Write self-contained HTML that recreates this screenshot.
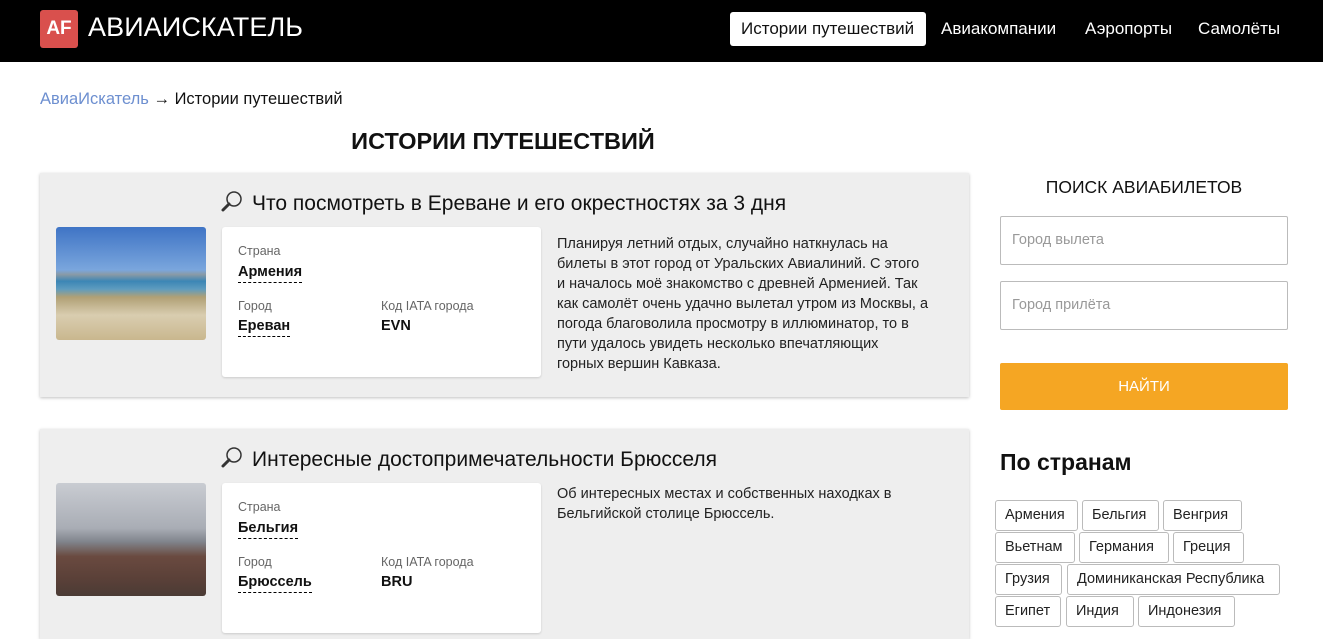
<!DOCTYPE html>
<html><head><meta charset="utf-8"><style>
*{box-sizing:border-box;margin:0;padding:0}
body{width:1323px;height:623px;overflow:hidden;background:#fff;font-family:"Liberation Sans","DejaVu Sans",sans-serif;color:#111;position:relative}
.a{position:absolute}
.hdr{left:0;top:0;width:1323px;height:62px;background:#000}
.logo{left:40px;top:10px;width:38px;height:38px;background:#d9504d;border-radius:3px;color:#fff;font-weight:bold;font-size:19px;line-height:38px;text-align:center}
.brand{left:88px;top:12px;color:#fff;font-size:27px;letter-spacing:0.1px}
.nav{top:12px;height:34px;line-height:34px;font-size:17px;color:#fff}
.nav.on{background:#fff;color:#111;border-radius:3px;padding:0 11px}
.card{left:40px;width:929px;background:#eee;box-shadow:0 1px 3px rgba(0,0,0,.25)}
.ttl{font-size:21px;color:#111;white-space:nowrap}
.img{width:150px;height:113px;border-radius:3px}
.info{width:319px;background:#fff;border-radius:3px;box-shadow:0 1px 2px rgba(0,0,0,.15)}
.lb{font-size:12.5px;color:#666}
.vl{font-size:14.5px;font-weight:bold;border-bottom:1px dashed #000;padding-bottom:2px;color:#111}
.desc{font-size:14.5px;line-height:20px;color:#222;white-space:nowrap}
.inp{left:1000px;width:288px;height:49px;border:1px solid #bbb;border-radius:2px;font-size:14.5px;color:#999;padding:15px 11px}
.tag{position:absolute;height:31px;border:1px solid #bbb;border-radius:3px;font-size:14.5px;line-height:29px;padding:0 9px;color:#222}
</style></head><body>
<div class="a hdr"></div>
<div class="a logo">AF</div>
<div class="a brand">АВИАИСКАТЕЛЬ</div>
<div class="a nav on" style="left:730px;width:196px">Истории путешествий</div>
<div class="a nav" style="left:941px">Авиакомпании</div>
<div class="a nav" style="left:1085px">Аэропорты</div>
<div class="a nav" style="left:1198px">Самолёты</div>

<div class="a" style="left:40px;top:90px;font-size:16.5px"><span style="color:#6d8fd0">АвиаИскатель</span> → Истории путешествий</div>
<div class="a" style="left:40px;top:128px;width:929px;text-align:center;font-size:23.5px;font-weight:600;padding-right:3px">ИСТОРИИ ПУТЕШЕСТВИЙ</div>

<div class="a card" style="top:173px;height:224px"></div>
<svg class="a" style="left:220px;top:190px" width="24" height="24" viewBox="0 0 24 24"><circle cx="14" cy="9" r="7" fill="none" stroke="#333" stroke-width="1.5"/><path d="M9 14 L3 20" stroke="#333" stroke-width="3" stroke-linecap="round"/></svg>
<div class="a ttl" style="left:252px;top:192px">Что посмотреть в Ереване и его окрестностях за 3 дня</div>
<div class="a img" style="left:56px;top:227px;background:linear-gradient(#3f74c5 0%,#7aa6dd 38%,#8a9aa6 42%,#3c86b5 48%,#5e9cbf 55%,#b0a075 62%,#d9cdb0 78%,#c9b78e 100%)"></div>
<div class="a info" style="left:222px;top:227px;height:150px"></div>
<div class="a lb" style="left:238px;top:244px">Страна</div>
<div class="a vl" style="left:238px;top:264px">Армения</div>
<div class="a lb" style="left:238px;top:299px">Город</div>
<div class="a vl" style="left:238px;top:318px">Ереван</div>
<div class="a lb" style="left:381px;top:299px">Код IATA города</div>
<div class="a" style="left:381px;top:318px;font-size:14.5px;font-weight:bold">EVN</div>
<div class="a desc" style="left:557px;top:234px">Планируя летний отдых, случайно наткнулась на<br>билеты в этот город от Уральских Авиалиний. С этого<br>и началось моё знакомство с древней Арменией. Так<br>как самолёт очень удачно вылетал утром из Москвы, а<br>погода благоволила просмотру в иллюминатор, то в<br>пути удалось увидеть несколько впечатляющих<br>горных вершин Кавказа.</div>

<div class="a card" style="top:429px;height:210px"></div>
<svg class="a" style="left:220px;top:446px" width="24" height="24" viewBox="0 0 24 24"><circle cx="14" cy="9" r="7" fill="none" stroke="#333" stroke-width="1.5"/><path d="M9 14 L3 20" stroke="#333" stroke-width="3" stroke-linecap="round"/></svg>
<div class="a ttl" style="left:252px;top:448px">Интересные достопримечательности Брюсселя</div>
<div class="a img" style="left:56px;top:483px;background:linear-gradient(#c9ccd2 0%,#a9adb5 40%,#80848c 52%,#6a4a40 65%,#5a4038 85%,#4b3b35 100%)"></div>
<div class="a info" style="left:222px;top:483px;height:150px"></div>
<div class="a lb" style="left:238px;top:500px">Страна</div>
<div class="a vl" style="left:238px;top:520px">Бельгия</div>
<div class="a lb" style="left:238px;top:555px">Город</div>
<div class="a vl" style="left:238px;top:574px">Брюссель</div>
<div class="a lb" style="left:381px;top:555px">Код IATA города</div>
<div class="a" style="left:381px;top:574px;font-size:14.5px;font-weight:bold">BRU</div>
<div class="a desc" style="left:557px;top:484px">Об интересных местах и собственных находках в<br>Бельгийской столице Брюссель.</div>

<div class="a" style="left:1000px;top:177px;width:288px;text-align:center;font-size:17.5px">ПОИСК АВИАБИЛЕТОВ</div>
<div class="a inp" style="top:216px">Город вылета</div>
<div class="a inp" style="top:281px">Город прилёта</div>
<div class="a" style="left:1000px;top:363px;width:288px;height:47px;background:#f5a623;border-radius:2px;color:#fff;font-size:15px;line-height:47px;text-align:center">НАЙТИ</div>
<div class="a" style="left:1000px;top:449px;font-size:23px;font-weight:bold">По странам</div>
<div class="tag" style="left:995px;top:500px;width:83px">Армения</div>
<div class="tag" style="left:1082px;top:500px;width:77px">Бельгия</div>
<div class="tag" style="left:1163px;top:500px;width:79px">Венгрия</div>
<div class="tag" style="left:995px;top:532px;width:80px">Вьетнам</div>
<div class="tag" style="left:1079px;top:532px;width:90px">Германия</div>
<div class="tag" style="left:1173px;top:532px;width:71px">Греция</div>
<div class="tag" style="left:995px;top:564px;width:67px">Грузия</div>
<div class="tag" style="left:1067px;top:564px;width:213px">Доминиканская Республика</div>
<div class="tag" style="left:995px;top:596px;width:66px">Египет</div>
<div class="tag" style="left:1066px;top:596px;width:68px">Индия</div>
<div class="tag" style="left:1138px;top:596px;width:97px">Индонезия</div>
</body></html>
